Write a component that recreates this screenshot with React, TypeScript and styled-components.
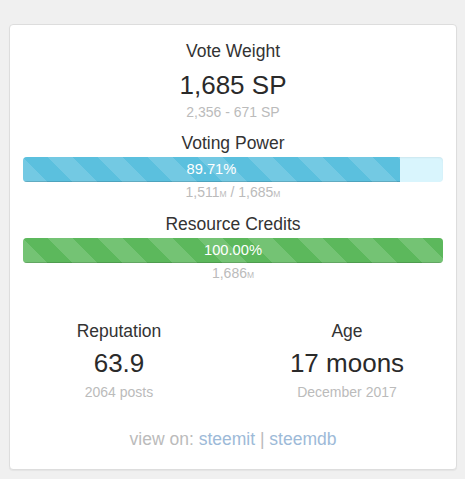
import React from "react";
import styled, { createGlobalStyle } from "styled-components";

const GlobalStyle = createGlobalStyle`
  html, body {
    margin: 0;
    padding: 0;
    background: #f0f0f0;
  }
  body {
    font-family: "Liberation Sans", Arial, Helvetica, sans-serif;
    color: #333;
  }
`;

const Page = styled.div`
  padding: 24px 8px 11px 9px;
`;

const Card = styled.div`
  background: #fff;
  border: 1px solid #ddd;
  border-radius: 4px;
  box-shadow: 0 1px 1px rgba(0, 0, 0, 0.05);
  padding: 16px 13px 20px;
  text-align: center;
`;

const Title = styled.div<{ $gap?: number }>`
  font-size: 17.5px;
  line-height: 20px;
  color: #333;
  margin-top: ${(p) => p.$gap ?? 0}px;
`;

const BigValue = styled.div<{ $gap?: number }>`
  font-size: 26px;
  line-height: 30px;
  color: #2a2a2a;
  margin-top: ${(p) => p.$gap ?? 0}px;
`;

const Sub = styled.div<{ $gap?: number }>`
  font-size: 14px;
  line-height: 20px;
  color: #bbb;
  margin-top: ${(p) => p.$gap ?? 0}px;
`;

const Unit = styled.span`
  font-size: 8.5px;
`;

const Track = styled.div<{ $bg: string }>`
  margin-top: 4px;
  height: 25px;
  border-radius: 4px;
  overflow: hidden;
  background: ${(p) => p.$bg};
  box-shadow: inset 0 1px 2px rgba(0, 0, 0, 0.06);
  display: flex;
`;

const Fill = styled.div<{ $color: string }>`
  height: 100%;
  background-color: ${(p) => p.$color};
  background-image: linear-gradient(
    45deg,
    transparent 25%,
    rgba(255, 255, 255, 0.15) 25%,
    rgba(255, 255, 255, 0.15) 50%,
    transparent 50%,
    transparent 75%,
    rgba(255, 255, 255, 0.15) 75%,
    rgba(255, 255, 255, 0.15)
  );
  background-size: 50px 50px;
  box-shadow: inset 0 -1px 0 rgba(0, 0, 0, 0.15);
  color: #fff;
  font-size: 14.7px;
  line-height: 25px;
  text-align: center;
  white-space: nowrap;
`;

const Stats = styled.div`
  margin: 36px -18px 0;
  display: grid;
  grid-template-columns: 1fr 1fr;
`;

const Stat = styled.div`
  display: flex;
  flex-direction: column;
  align-items: center;
`;

const Footer = styled.div`
  margin-top: 27px;
  font-size: 17.5px;
  line-height: 20px;
  color: #bbb;
`;

const Link = styled.a`
  color: #9dbad8;
  text-decoration: none;
`;

const Bar = ({
  pct,
  color,
  bg,
}: {
  pct: number;
  color: string;
  bg: string;
}) => (
  <Track $bg={bg}>
    <Fill $color={color} style={{ width: `${pct}%` }}>
      {pct.toFixed(2)}%
    </Fill>
  </Track>
);

export default function App() {
  return (
    <>
      <GlobalStyle />
      <Page>
        <Card>
          <Title>Vote Weight</Title>
          <BigValue $gap={9}>1,685 SP</BigValue>
          <Sub $gap={2}>2,356 - 671 SP</Sub>

          <Title $gap={11}>Voting Power</Title>
          <Bar pct={89.71} color="#5bc0de" bg="#d9f5fd" />
          <Sub>
            1,511<Unit>M</Unit> / 1,685<Unit>M</Unit>
          </Sub>

          <Title $gap={10}>Resource Credits</Title>
          <Bar pct={100} color="#5cb85c" bg="#dff0d8" />
          <Sub>
            1,686<Unit>M</Unit>
          </Sub>

          <Stats>
            <Stat>
              <Title>Reputation</Title>
              <BigValue $gap={7}>63.9</BigValue>
              <Sub $gap={4}>2064 posts</Sub>
            </Stat>
            <Stat>
              <Title>Age</Title>
              <BigValue $gap={7}>17 moons</BigValue>
              <Sub $gap={4}>December 2017</Sub>
            </Stat>
          </Stats>

          <Footer>
            view on: <Link href="#">steemit</Link> | <Link href="#">steemdb</Link>
          </Footer>
        </Card>
      </Page>
    </>
  );
}
